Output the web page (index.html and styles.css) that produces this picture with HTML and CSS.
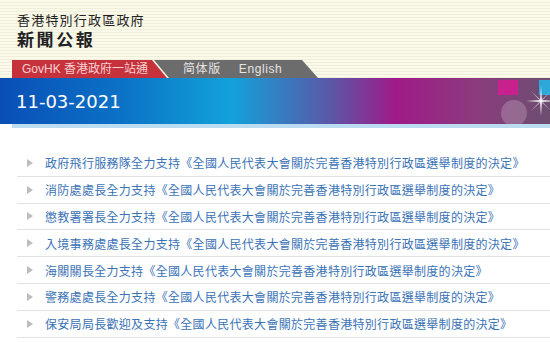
FILE: index.html
```html
<!DOCTYPE html>
<html lang="zh-HK">
<head>
    <meta charset="UTF-8">
    <title>新聞公報</title>
    <link rel="stylesheet" href="styles.css">
</head>
<body>
    <div class="masthead">
        <div class="gov-name">香港特別行政區政府</div>
        <div class="site-name">新聞公報</div>
    </div>

    <div class="nav">
        <a class="tab-govhk">GovHK 香港政府一站通</a>
        <div class="tab-lang">
            <a>简体版</a>
            <a>English</a>
        </div>
    </div>

    <div class="banner">
        <div class="date">11-03-2021</div>
        <span class="deco sq-pink"></span>
        <span class="deco sq-cyan"></span>
        <span class="deco glow"></span>
        <svg class="deco star" width="30" height="30" viewBox="0 0 30 30">
            <path d="M15 0 L16 14 L30 15 L16 16 L15 30 L14 16 L0 15 L14 14 Z" fill="#fff" opacity="0.85"/>
            <path d="M5 5 L15.5 14.5 L25 25 L14.5 15.5 Z" fill="#fff" opacity="0.5"/>
            <path d="M25 5 L15.5 15.5 L5 25 L14.5 14.5 Z" fill="#fff" opacity="0.5"/>
        </svg>
    </div>
    <div class="banner-line"></div>

    <ul class="news">
        <li><a>政府飛行服務隊全力支持《全國人民代表大會關於完善香港特別行政區選舉制度的決定》</a></li>
        <li><a>消防處處長全力支持《全國人民代表大會關於完善香港特別行政區選舉制度的決定》</a></li>
        <li><a>懲教署署長全力支持《全國人民代表大會關於完善香港特別行政區選舉制度的決定》</a></li>
        <li><a>入境事務處處長全力支持《全國人民代表大會關於完善香港特別行政區選舉制度的決定》</a></li>
        <li><a>海關關長全力支持《全國人民代表大會關於完善香港特別行政區選舉制度的決定》</a></li>
        <li><a>警務處處長全力支持《全國人民代表大會關於完善香港特別行政區選舉制度的決定》</a></li>
        <li><a>保安局局長歡迎及支持《全國人民代表大會關於完善香港特別行政區選舉制度的決定》</a></li>
    </ul>
</body>
</html>
```

FILE: styles.css
```css
* {
    margin: 0;
    padding: 0;
    box-sizing: border-box;
}

body {
    font-family: "Liberation Sans", "Noto Sans CJK TC", sans-serif;
    background: #fff;
    width: 550px;
    overflow: hidden;
}

.masthead {
    height: 60px;
    padding: 12px 0 0 17px;
    background: repeating-linear-gradient(180deg, #faf9ea 0, #faf9ea 2px, #efeed9 2px, #efeed9 3px);
    color: #222;
}

.gov-name {
    font-size: 13px;
    line-height: 17px;
    letter-spacing: 1.2px;
}

.site-name {
    margin-top: 2px;
    font-size: 17px;
    line-height: 20px;
    font-weight: bold;
    letter-spacing: 2.6px;
}

.nav {
    display: flex;
    height: 18px;
    padding-left: 12px;
    background: repeating-linear-gradient(180deg, #faf9ea 0, #faf9ea 2px, #efeed9 2px, #efeed9 3px);
}

.nav a {
    font-size: 12px;
    line-height: 18px;
}

.tab-govhk {
    width: 155px;
    padding-left: 10px;
    background: #c6323c;
    color: #f6d0d0;
    clip-path: polygon(0 0, 140px 0, 155px 100%, 0 100%);
}

.tab-lang {
    display: flex;
    gap: 18px;
    width: 164px;
    margin-left: -13px;
    padding-left: 29px;
    background: #6c6c6c;
    clip-path: polygon(0 0, 148px 0, 164px 100%, 15px 100%);
}

.tab-lang a {
    color: #e4e4e4;
    letter-spacing: 0.6px;
}

.banner {
    position: relative;
    display: flex;
    align-items: center;
    height: 46px;
    padding-left: 16px;
    overflow: hidden;
    background: linear-gradient(90deg, #0a4fb6 0%, #0b72c6 22%, #12a2da 42%, #5a58a8 60%, #a01a88 72%, #8c3a7e 86%, #6c4e70 100%);
}

.date {
    font-family: "DejaVu Sans", sans-serif;
    font-size: 18px;
    color: #fff;
}

.deco {
    position: absolute;
}

.sq-pink {
    left: 498px;
    top: 2px;
    width: 20px;
    height: 15px;
    background: #c8208c;
}

.sq-cyan {
    left: 539px;
    top: 2px;
    width: 11px;
    height: 15px;
    background: #2ea8d8;
}

.glow {
    left: 501px;
    top: 22px;
    width: 26px;
    height: 26px;
    border-radius: 50%;
    background: rgba(255, 255, 255, 0.2);
}

.star {
    left: 526px;
    top: 8px;
}

.banner-line {
    height: 4px;
    margin-left: 12px;
    background: #bcdcf2;
}

.news {
    list-style: none;
    margin: 22px 0 0 17px;
}

.news li {
    display: flex;
    align-items: center;
    height: 26.8px;
    padding-left: 10px;
    border-bottom: 1px solid #e2e2e2;
}

.news li::before {
    content: "";
    width: 0;
    height: 0;
    margin-right: 12px;
    border-top: 4px solid transparent;
    border-bottom: 4px solid transparent;
    border-left: 6px solid #bdbdbd;
}

.news a {
    font-size: 12px;
    letter-spacing: 0.3px;
    color: #3a72b6;
    white-space: nowrap;
}
```
